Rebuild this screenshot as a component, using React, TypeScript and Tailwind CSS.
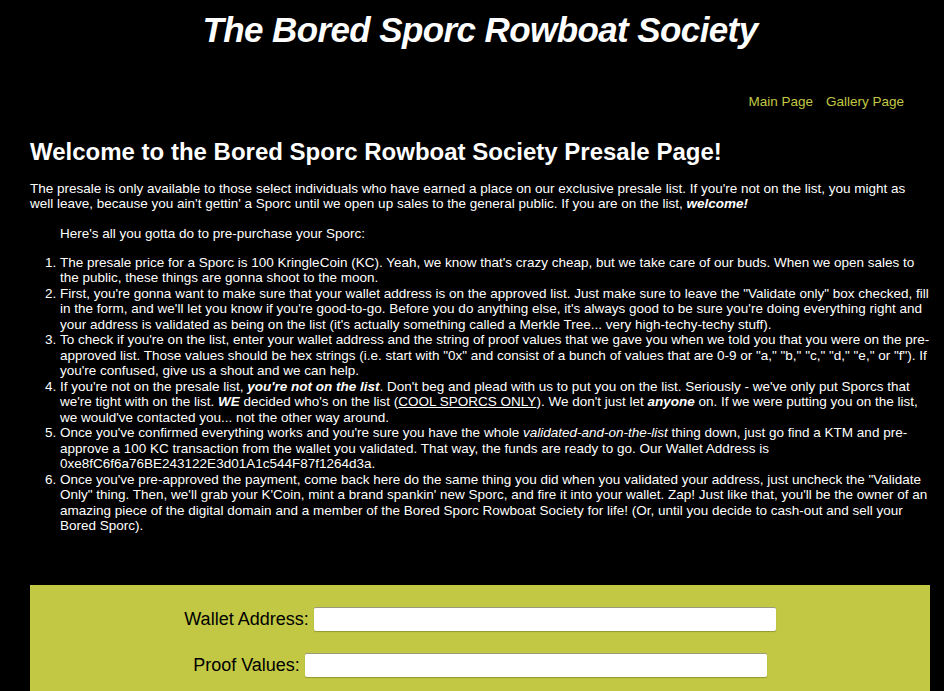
import React from "react";

const font = { fontFamily: '"Liberation Sans", Arial, Helvetica, sans-serif' };

export default function App() {
  return (
    <div className="bg-black min-h-screen text-white pb-10 pl-[30px] pr-[14px]" style={font}>
      <h1 className="text-center italic font-bold text-[35px] leading-[40px] tracking-[-0.6px] pt-[10px]">
        The Bored Sporc Rowboat Society
      </h1>

      <nav className="flex justify-end gap-[13px] mt-[44px] pr-[26px] text-[13.5px] leading-[16px] text-[#c2c844]">
        <a href="#">Main Page</a>
        <a href="#">Gallery Page</a>
      </nav>

      <h2 className="font-bold text-[24px] leading-[28px] mt-[28px]">
        Welcome to the Bored Sporc Rowboat Society Presale Page!
      </h2>

      <p className="text-[13.5px] leading-[15px] mt-[14.5px]">
        The presale is only available to those select individuals who have earned a place on our exclusive presale
        list. If you're not on the list, you might as well leave, because you ain't gettin' a Sporc until we open up
        sales to the general public. If you are on the list, <b><i>welcome!</i></b>
      </p>

      <p className="text-[13.5px] leading-[15px] mt-[15px] pl-[30px]">Here's all you gotta do to pre-purchase your Sporc:</p>

      <ol className="list-decimal pl-[30px] text-[13.5px] leading-[15.5px] mt-[14px]">
        <li>
          The presale price for a Sporc is 100 KringleCoin (KC). Yeah, we know that's crazy cheap, but we take care of
          our buds. When we open sales to the public, these things are gonna shoot to the moon.
        </li>
        <li>
          First, you're gonna want to make sure that your wallet address is on the approved list. Just make sure to
          leave the "Validate only" box checked, fill in the form, and we'll let you know if you're good-to-go. Before
          you do anything else, it's always good to be sure you're doing everything right and your address is validated
          as being on the list (it's actually something called a Merkle Tree... very high-techy-techy stuff).
        </li>
        <li>
          To check if you're on the list, enter your wallet address and the string of proof values that we gave you
          when we told you that you were on the pre-approved list. Those values should be hex strings (i.e. start with
          "0x" and consist of a bunch of values that are 0-9 or "a," "b," "c," "d," "e," or "f"). If you're confused,
          give us a shout and we can help.
        </li>
        <li>
          If you're not on the presale list, <b><i>you're not on the list</i></b>. Don't beg and plead with us to put
          you on the list. Seriously - we've only put Sporcs that we're tight with on the list. <b><i>WE</i></b>{" "}
          decided who's on the list (<a href="#" className="underline">COOL SPORCS ONLY</a>). We don't just let{" "}
          <b><i>anyone</i></b> on. If we were putting you on the list, we would've contacted you... not the other way
          around.
        </li>
        <li>
          Once you've confirmed everything works and you're sure you have the whole <i>validated-and-on-the-list</i>{" "}
          thing down, just go find a KTM and pre-approve a 100 KC transaction from the wallet you validated. That way,
          the funds are ready to go. Our Wallet Address is 0xe8fC6f6a76BE243122E3d01A1c544F87f1264d3a.
        </li>
        <li>
          Once you've pre-approved the payment, come back here do the same thing you did when you validated your
          address, just uncheck the "Validate Only" thing. Then, we'll grab your K'Coin, mint a brand spankin' new
          Sporc, and fire it into your wallet. Zap! Just like that, you'll be the owner of an amazing piece of the
          digital domain and a member of the Bored Sporc Rowboat Society for life! (Or, until you decide to cash-out and
          sell your Bored Sporc).
        </li>
      </ol>

      <form className="mt-[51px] bg-[#c2c844] pt-[22px] pb-[60px] flex flex-col items-center gap-[22px] text-black">
        <div className="flex items-center gap-[5px]">
          <label className="text-[18px] leading-[24px]">Wallet Address:</label>
          <input
            type="text"
            className="w-[462px] h-[24px] bg-white border-t border-t-[#9a9a7a] rounded-[2px] shadow-[0_1px_1px_rgba(0,0,0,0.25)] outline-none"
          />
        </div>
        <div className="flex items-center gap-[5px]">
          <label className="text-[18px] leading-[24px]">Proof Values:</label>
          <input
            type="text"
            className="w-[462px] h-[24px] bg-white border-t border-t-[#9a9a7a] rounded-[2px] shadow-[0_1px_1px_rgba(0,0,0,0.25)] outline-none"
          />
        </div>
      </form>
    </div>
  );
}
